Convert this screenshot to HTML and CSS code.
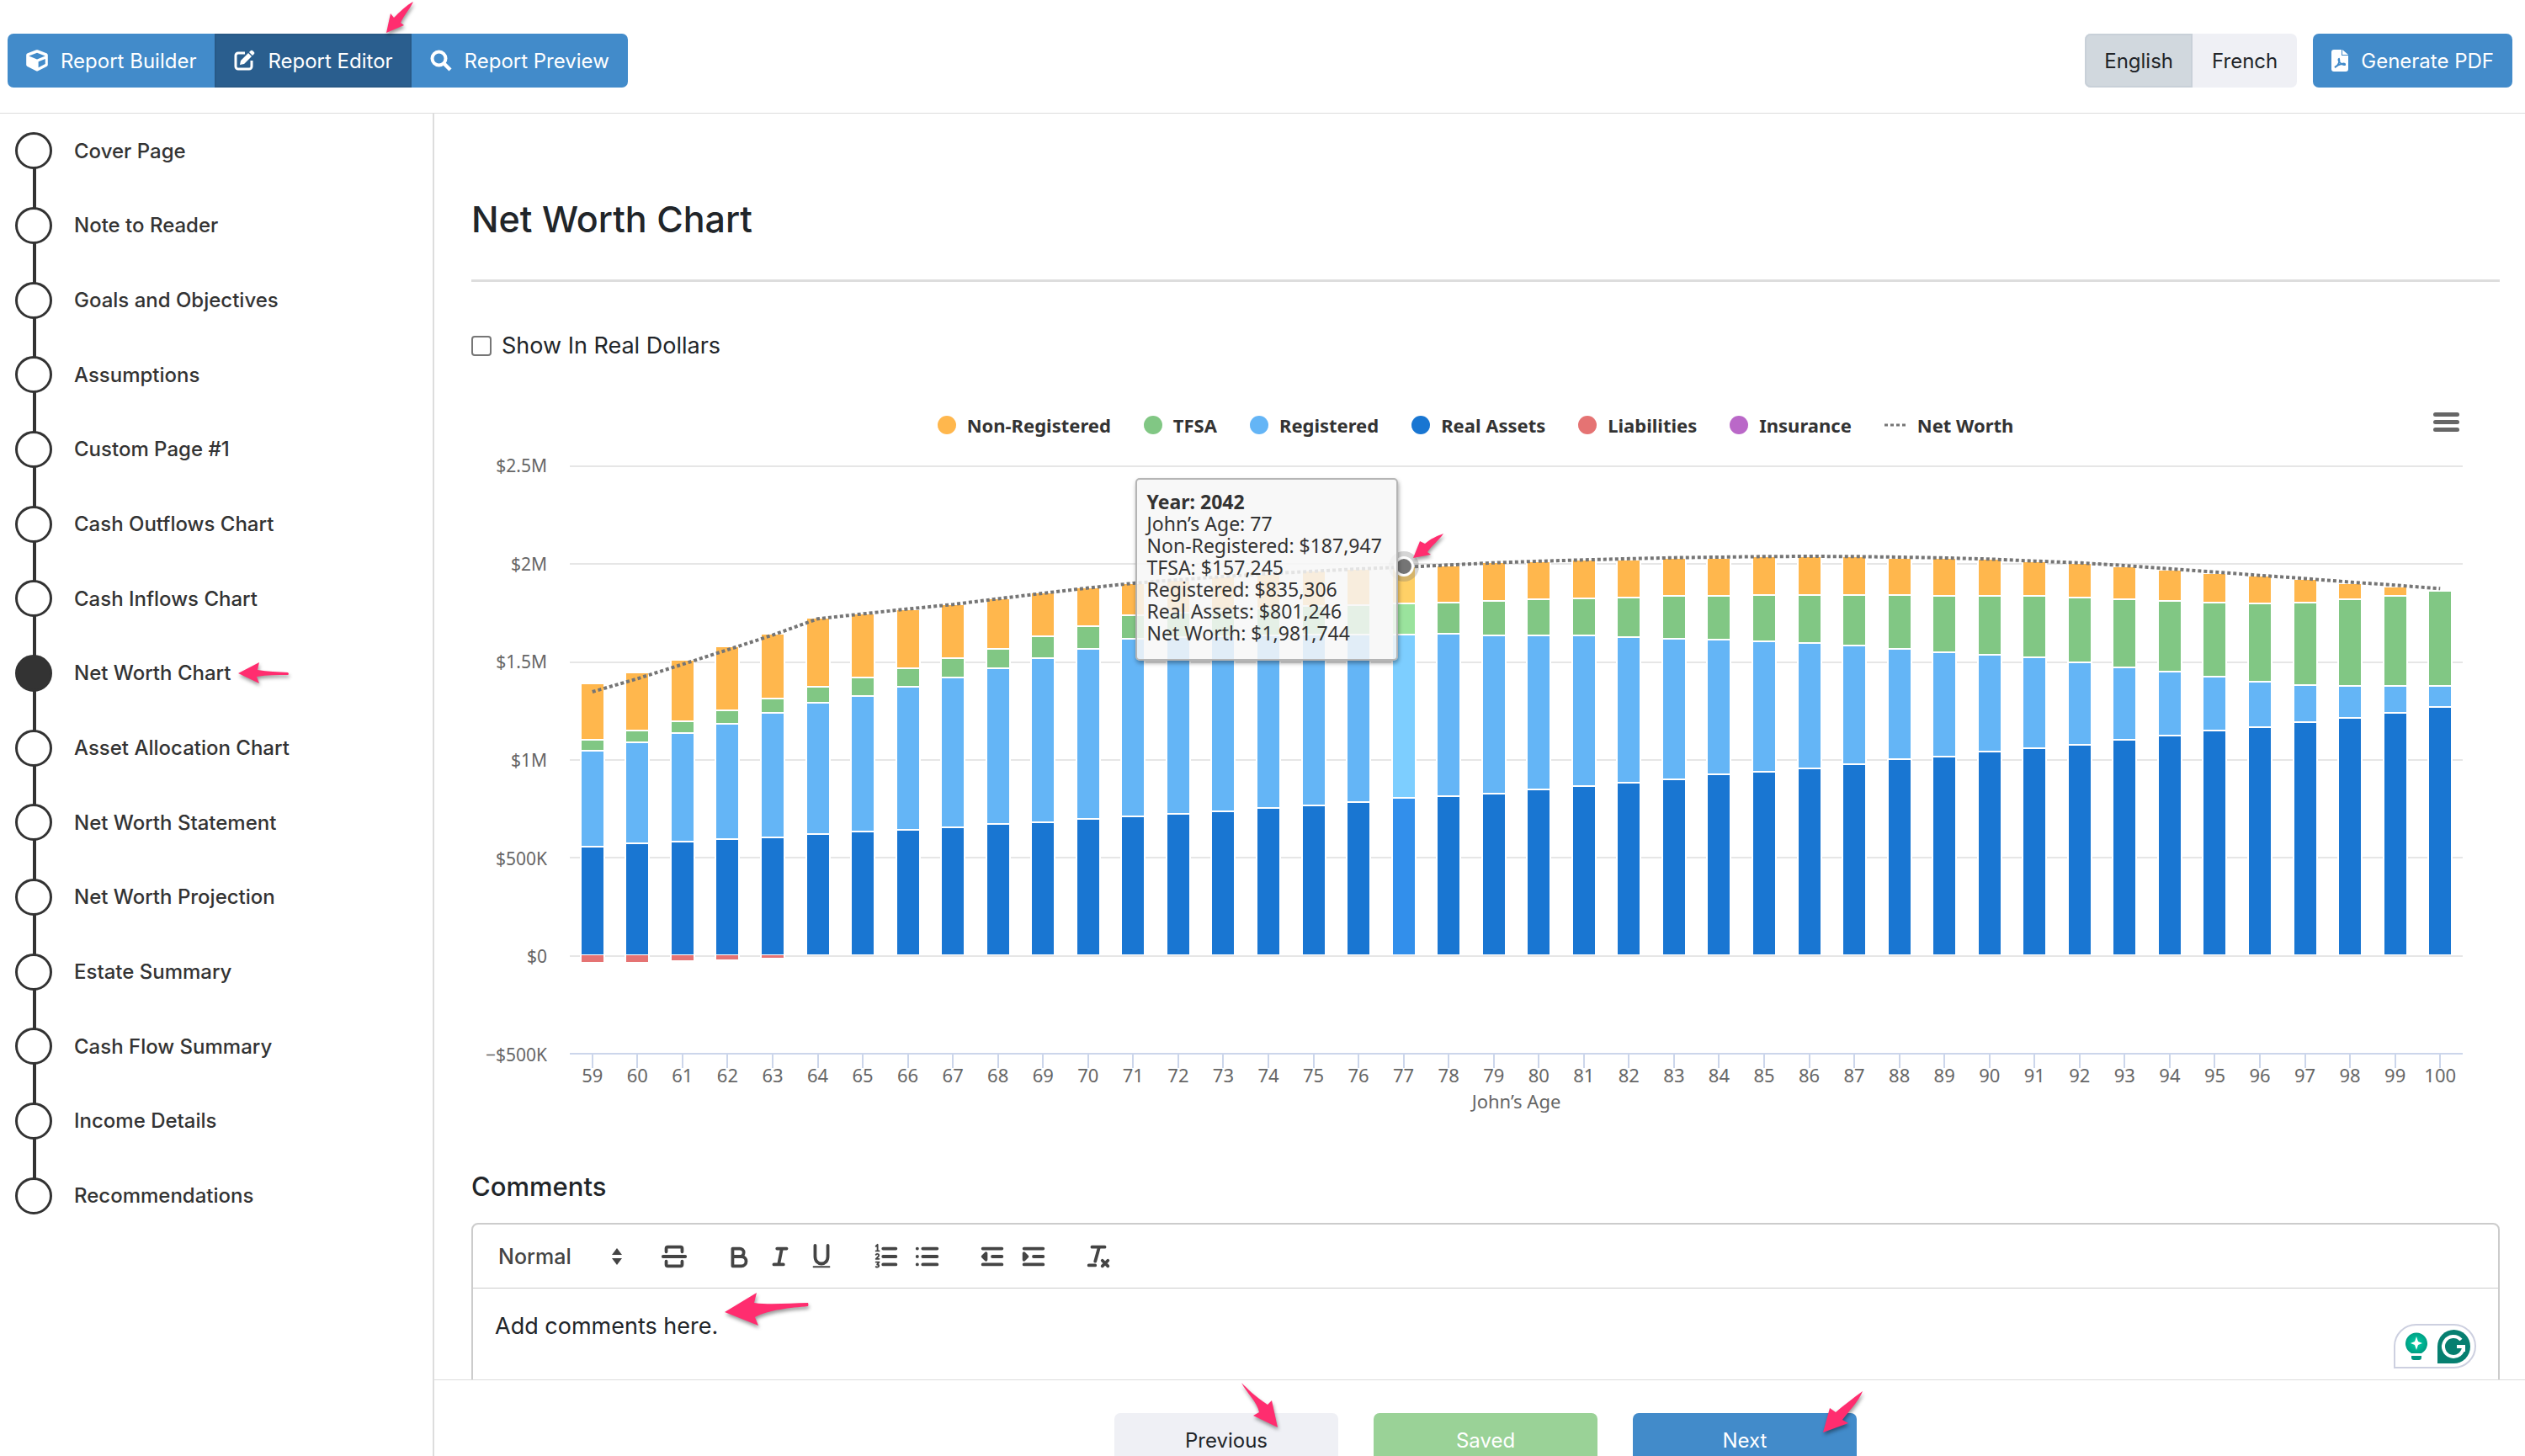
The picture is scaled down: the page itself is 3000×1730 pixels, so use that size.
FILE: index.html
```
<!DOCTYPE html>
<html lang="en">
<head>
    <meta charset="UTF-8">
    <meta name="viewport" content="width=device-width, initial-scale=1.0">
    <title>Report Editor - Net Worth Chart</title>
    <link rel="stylesheet" href="styles.css">
</head>
<body>
    <header class="topbar">
        <div class="btn-group">
            <button class="btn btn-primary">
                <svg class="icon" viewBox="0 0 512 512"><path fill="currentColor" d="M239 6 35 83a48 48 0 0 0-31 45v223c0 18 10 35 27 43l204 102a48 48 0 0 0 43 0l204-102c16-8 26-25 26-43V128c0-20-12-38-31-45L273 6a48 48 0 0 0-34 0zm17 68 192 72v1l-192 78-192-78v-1zm32 342V282l160-65v119z"/></svg>
                Report Builder
            </button>
            <button class="btn btn-primary active">
                <svg class="icon" viewBox="0 0 26 26"><path d="M14 4H6a3 3 0 0 0-3 3v13a3 3 0 0 0 3 3h13a3 3 0 0 0 3-3v-7" fill="none" stroke="currentColor" stroke-width="3"/><path fill="currentColor" d="m18 4 4 4-9 9-5 1 1-5zM19 3l1.500-1.500a2 2 0 0 1 3 0l1 1a2 2 0 0 1 0 3L23 7z"/></svg>
                Report Editor
            </button>
            <button class="btn btn-primary">
                <svg class="icon" viewBox="0 0 26 26"><circle cx="10.500" cy="10.500" r="8" fill="none" stroke="currentColor" stroke-width="4"/><path d="m16 16 8 8" stroke="currentColor" stroke-width="4.500"/></svg>
                Report Preview
            </button>
            <svg class="arrow arrow-editor" viewBox="0 0 34 40"><path d="M1 38 6 15l4 5C16 14 25 5 33 1 29 10 22 17 18 26l4 3z"/></svg>
        </div>
        <div class="actions">
            <div class="btn-group">
                <button class="btn btn-light active">English</button>
                <button class="btn btn-light">French</button>
            </div>
            <button class="btn btn-primary btn-pdf">
                <svg class="icon icon-pdf" viewBox="0 0 20 26"><path fill="currentColor" d="M3 0h9v7h8v16a3 3 0 0 1-3 3H3a3 3 0 0 1-3-3V3a3 3 0 0 1 3-3zm10 0 7 6h-7z"/><path d="M4 21c5-2 6-8 5-10-2 1 2 8 7 7 1-3-7-1-12 3z" fill="none" stroke="#428bca" stroke-width="2"/></svg>
                Generate PDF
            </button>
        </div>
    </header>

    <div class="layout">
        <nav class="sidebar">
            <ol class="steps">
                <li><a href="#">Cover Page</a></li>
                <li><a href="#">Note to Reader</a></li>
                <li><a href="#">Goals and Objectives</a></li>
                <li><a href="#">Assumptions</a></li>
                <li><a href="#">Custom Page #1</a></li>
                <li><a href="#">Cash Outflows Chart</a></li>
                <li><a href="#">Cash Inflows Chart</a></li>
                <li class="current">
                    <a href="#">Net Worth Chart</a>
                    <svg class="arrow arrow-step" viewBox="0 0 62 28"><path d="M1 14 26 1l-2 9c12 2 24 2 36 3q2 2 0 3c-12 0-25 0-37 2l3 8z"/></svg>
                </li>
                <li><a href="#">Asset Allocation Chart</a></li>
                <li><a href="#">Net Worth Statement</a></li>
                <li><a href="#">Net Worth Projection</a></li>
                <li><a href="#">Estate Summary</a></li>
                <li><a href="#">Cash Flow Summary</a></li>
                <li><a href="#">Income Details</a></li>
                <li><a href="#">Recommendations</a></li>
            </ol>
        </nav>

        <main class="main">
            <div class="content">
                <h1>Net Worth Chart</h1>
                <hr>
                <label class="check"><input type="checkbox"> Show In Real Dollars</label>

                <section class="chart">
                    <ul class="legend">
                        <li><span class="dot non-registered"></span>Non-Registered</li>
                        <li><span class="dot tfsa"></span>TFSA</li>
                        <li><span class="dot registered"></span>Registered</li>
                        <li><span class="dot real-assets"></span>Real Assets</li>
                        <li><span class="dot liabilities"></span>Liabilities</li>
                        <li><span class="dot insurance"></span>Insurance</li>
                        <li><svg class="dash" viewBox="0 0 26 4"><path d="M0 2h26"/></svg>Net Worth</li>
                    </ul>
                    <button class="chart-menu" aria-label="Chart menu"><span></span><span></span><span></span></button>

                    <div class="plot-row">
                        <div class="y-axis">
                            <span>$2.5M</span>
                            <span>$2M</span>
                            <span>$1.5M</span>
                            <span>$1M</span>
                            <span>$500K</span>
                            <span>$0</span>
                            <span>−$500K</span>
                        </div>
                        <div class="plot">
                            <div class="grid-lines">
                                <div></div><div></div><div></div><div></div><div></div><div></div>
                            </div>
                            <div class="bars" id="bars"></div>
                            <svg class="net-line" viewBox="0 0 42 3000" preserveAspectRatio="none"><polyline id="netLine" points=""/></svg>
                            <span class="marker"></span>
                            <div class="tooltip">
                                <strong>Year: 2042</strong>
                                <span>John’s Age: 77</span>
                                <span>Non-Registered: $187,947</span>
                                <span>TFSA: $157,245</span>
                                <span>Registered: $835,306</span>
                                <span>Real Assets: $801,246</span>
                                <span>Net Worth: $1,981,744</span>
                            </div>
                            <svg class="arrow arrow-point" viewBox="0 0 38 32"><path d="M1 30 9 10l6 3C22 7 29 4 37 1 31 10 23 15 18 23l4 3z"/></svg>
                        </div>
                    </div>
                    <div class="x-axis" id="xAxis"></div>
                    <div class="x-title">John’s Age</div>
                </section>

                <h2>Comments</h2>
                <div class="editor">
                    <div class="toolbar">
                        <div class="format">
                            <select aria-label="Text style"><option>Normal</option></select>
                            <svg viewBox="0 0 14 20"><path d="m7 0 6 8H1zM7 20l-6-8h12z"/></svg>
                        </div>
                        <div class="tools">
                            <button aria-label="Page break"><svg viewBox="0 0 18 18"><path d="M4 6V4q0-1 1-1h8q1 0 1 1v2M4 12v2q0 1 1 1h8q1 0 1-1v-2M2 9h14"/></svg></button>
                        </div>
                        <div class="tools">
                            <button aria-label="Bold"><svg viewBox="0 0 18 18"><path d="M5 4h4.500a2.500 2.500 0 0 1 0 5H5zM5 9h5.500a2.500 2.500 0 0 1 0 6H5z"/></svg></button>
                            <button aria-label="Italic"><svg viewBox="0 0 18 18"><path d="M7 4h6M5 14h6M8 14l2-10"/></svg></button>
                            <button aria-label="Underline"><svg viewBox="0 0 18 18"><path d="M5 2v7c0 6 8 6 8 0V2"/><path class="thin" d="M4 15.500h10"/></svg></button>
                        </div>
                        <div class="tools">
                            <button aria-label="Ordered list"><svg viewBox="0 0 18 18"><path d="M7 4h8M7 9h8M7 14h8"/><path class="thin" d="m2.500 2.500 1-1v4m-1 0h2M2.500 7.800c1-1 2.500 0 1.500 1.200l-1.500 1.500h2M2.500 12.500h2L3.300 14c1.500 0 1.500 2-.800 1.500"/></svg></button>
                            <button aria-label="Bullet list"><svg viewBox="0 0 18 18"><path d="M6 4h9M6 9h9M6 14h9"/><path d="M2.500 4h.1M2.500 9h.1M2.500 14h.1"/></svg></button>
                        </div>
                        <div class="tools">
                            <button aria-label="Outdent"><svg viewBox="0 0 18 18"><path d="M3 4h12M3 14h12M9 9h6"/><path class="solid" d="M5 7v4L3 9z"/></svg></button>
                            <button aria-label="Indent"><svg viewBox="0 0 18 18"><path d="M3 4h12M3 14h12M9 9h6"/><path class="solid" d="M3 7v4l2-2z"/></svg></button>
                        </div>
                        <div class="tools">
                            <button aria-label="Clear formatting"><svg viewBox="0 0 18 18"><path d="M5 3h8M9.500 3 7 12M3 14.500h4M11.500 11.500l3.500 3.500M15 11.500l-3.500 3.500"/></svg></button>
                        </div>
                    </div>
                    <textarea aria-label="Comments">Add comments here.</textarea>
                    <svg class="arrow arrow-comment" viewBox="0 0 102 42"><path d="M1 24 39 1l-3 12c20 3 44 0 64 0q1 2 0 4c-20 2-47 4-63 13l4 10z"/></svg>
                    <div class="assistant">
                        <svg viewBox="0 0 26 33"><defs><radialGradient id="bulb"><stop offset="0" stop-color="#00d2a8"/><stop offset="1" stop-color="#009f84"/></radialGradient></defs><path fill="url(#bulb)" d="M7 25a13 13 0 1 1 12 0z"/><path fill="#fff" d="m13 5 2 6 5 2-5 2-2 6-2-6-5-2 5-2z"/><path fill="#009580" d="M7 28h12v2q0 3-3 3h-6q-3 0-3-3z"/></svg>
                        <svg class="assistant-logo" viewBox="0 0 39 40"><path fill="#067f70" d="M0 40V20a19.500 20 0 1 1 19.500 20z"/><path d="M28 12a12 12 0 1 0 3 8h-8m8 0v6" fill="none" stroke="#fff" stroke-width="4"/></svg>
                    </div>
                </div>
            </div>

            <footer class="footer">
                <button class="btn btn-light">Previous
                    <svg class="arrow arrow-prev" viewBox="0 0 46 56"><path d="M1 1c7 7 16 16 31 26l5-5 7 32-29-14 7-4C20 24 7 13 1 1z"/></svg>
                </button>
                <button class="btn btn-success">Saved</button>
                <button class="btn btn-primary">Next
                    <svg class="arrow arrow-next" viewBox="0 0 50 52"><path d="M1 50 9 21l7 5C25 18 36 10 48 1 43 14 32 24 24 35l7 4z"/></svg>
                </button>
            </footer>
        </main>
    </div>

    <script src="script.js"></script>
</body>
</html>
```
FILE: styles.css
```
/* General */
*,
*::before,
*::after {
    margin: 0;
    padding: 0;
    box-sizing: border-box;
}

body {
    font-family: Inter, "Liberation Sans", sans-serif;
    font-size: 24px;
    color: #212529;
    background: #fff;
    height: 100vh;
    display: flex;
    flex-direction: column;
    overflow: hidden;
}

button, select, textarea {
    font: inherit;
    color: inherit;
}

/* Pink pointer arrows */
.arrow {
    position: absolute;
    overflow: visible;
    fill: #ff2d6f;
    filter: drop-shadow(1px 3px 2px rgba(0, 0, 0, 0.4));
    z-index: 5;
    pointer-events: none;
}

/* Top bar */
.topbar {
    display: flex;
    justify-content: space-between;
    padding: 40px 15px 30px 9px;
    border-bottom: 1px solid #ddd;
}

.btn-group {
    display: flex;
    position: relative;
}

.actions {
    display: flex;
    gap: 19px;
}

.btn {
    display: flex;
    align-items: center;
    justify-content: center;
    gap: 15px;
    height: 64px;
    padding: 0 22px;
    border: 0;
    border-radius: 7px;
    cursor: pointer;
}

.btn-group .btn {
    border-radius: 0;
}

.btn-group .btn:first-child {
    border-radius: 7px 0 0 7px;
}

.btn-group .btn:nth-child(3),
.actions .btn-group .btn:last-child {
    border-radius: 0 7px 7px 0;
}

.btn-primary {
    background: #428bca;
    color: #fff;
}

.btn-primary.active {
    background: #2a5e8e;
    box-shadow: inset 0 0 0 2px #285986;
}

.btn-light {
    padding: 0 23px;
    background: #eff0f5;
}

.btn-light.active {
    background: #d1d8de;
    box-shadow: inset 0 0 0 2px #c8d0d8;
}

.btn-success {
    background: #9ad297;
    color: #fff;
}

.icon {
    width: 26px;
    height: 26px;
}

.icon-pdf {
    width: 20px;
}

.arrow-editor {
    left: 449px;
    top: -39px;
    width: 34px;
    height: 40px;
}

/* Sidebar */
.layout {
    flex: 1;
    min-height: 0;
    display: flex;
}

.sidebar {
    width: 516px;
    flex: none;
    border-right: 2px solid #ddd;
}

.steps {
    list-style: none;
    display: grid;
    grid-auto-rows: 1fr;
    height: 1330px;
    padding-left: 18px;
    font-weight: 500;
}

.steps li {
    display: flex;
    align-items: center;
    position: relative;
}

.steps li::before {
    content: "";
    width: 44px;
    height: 44px;
    margin-right: 26px;
    border: 3px solid #333;
    border-radius: 50%;
    background: #fff;
    z-index: 1;
}

.steps li.current::before {
    background: #333;
}

/* line to the next step */
.steps li:not(:last-child)::after {
    content: "";
    position: absolute;
    left: 21px;
    top: 50%;
    width: 4px;
    height: 100%;
    background: #333;
}

.steps a {
    color: #333;
    text-decoration: none;
}

.steps .arrow-step {
    position: static;
    width: 62px;
    height: 28px;
    margin-left: 8px;
}

/* Main content */
.main {
    flex: 1;
    min-width: 0;
    display: flex;
    flex-direction: column;
}

.content {
    flex: 1;
    min-height: 0;
    overflow: hidden;
    padding: 95px 30px 0 44px;
}

h1 {
    font-size: 43px;
    line-height: 60px;
    font-weight: 500;
}

hr {
    height: 3px;
    border: 0;
    background: #ddd;
    margin: 42px 0 59px;
}

.check {
    display: flex;
    align-items: center;
    gap: 12px;
    font-size: 27px;
    line-height: 34px;
}

.check input {
    appearance: none;
    width: 24px;
    height: 24px;
    border: 2px solid #767676;
    border-radius: 4px;
    background: #fff;
}

/* Chart */
.chart {
    position: relative;
    margin-top: 62px;
    font-family: "Noto Sans", "Open Sans", sans-serif;
    font-size: 22px;
    color: #666;
}

.legend {
    list-style: none;
    display: flex;
    justify-content: center;
    gap: 39px;
    padding-right: 24px;
    margin-bottom: 33px;
    line-height: 30px;
    font-weight: 700;
    color: #333;
}

.legend li {
    display: flex;
    align-items: center;
    gap: 13px;
}

.dot {
    width: 22px;
    height: 22px;
    border-radius: 50%;
}

.dash {
    width: 26px;
    height: 4px;
    stroke: #757575;
    stroke-width: 3;
    stroke-dasharray: 4 3;
}

.non-registered { background: #ffb74d; }
.tfsa { background: #81c784; }
.registered { background: #64b5f6; }
.real-assets { background: #1976d2; }
.liabilities { background: #e57373; }
.insurance { background: #ba68c8; }

.chart-menu {
    position: absolute;
    right: 48px;
    top: 0;
    width: 31px;
    display: flex;
    flex-direction: column;
    gap: 4px;
    border: 0;
    background: none;
}

.chart-menu span {
    height: 5px;
    border-radius: 3px;
    background: #666;
}

.plot-row {
    display: flex;
    height: 700px;
}

.y-axis {
    width: 117px;
    padding-right: 27px;
    display: flex;
    flex-direction: column;
    justify-content: space-between;
    align-items: flex-end;
    font-size: 21px;
    line-height: 24px;
}

.y-axis span {
    margin: -12px 0;
}

.plot {
    flex: 1;
    position: relative;
    margin-right: 44px;
}

.grid-lines {
    height: 100%;
    display: flex;
    flex-direction: column;
    border-bottom: 2px solid #ccd6eb;
}

.grid-lines div {
    flex: 1;
    border-top: 2px solid #e6e6e6;
}

.bars {
    position: absolute;
    inset: -2px 0 2px;
    display: flex;
}

.bar {
    flex: 1;
    display: flex;
    flex-direction: column;
    justify-content: flex-end;
    align-items: center;
}

.bar div {
    width: 56%;
    flex: none;
    border: 2px solid #fff;
    border-bottom: 0;
}

.bar .below {
    height: 16.6667%;
    border: 0;
}

.bar .below div {
    width: 100%;
    border-top-width: 1px;
}

.bar.hover .non-registered { background: #ffd066; }
.bar.hover .tfsa { background: #9ae39d; }
.bar.hover .registered { background: #7dceff; }
.bar.hover .real-assets { background: #328feb; }

.net-line {
    position: absolute;
    inset: 0;
    width: 100%;
    height: 100%;
}

.net-line polyline {
    fill: none;
    stroke: #757575;
    stroke-width: 4;
    stroke-dasharray: 4 3;
    vector-effect: non-scaling-stroke;
}

.marker {
    position: absolute;
    left: calc(44% - 11px);
    top: 108px;
    width: 24px;
    height: 24px;
    border: 3px solid #fff;
    border-radius: 50%;
    background: #757575;
    box-shadow: 0 0 0 6px rgba(117, 117, 117, 0.3);
}

.tooltip {
    position: absolute;
    right: calc(56% + 6px);
    top: 15px;
    width: 312px;
    padding: 13px 12px 18px;
    display: flex;
    flex-direction: column;
    background: rgba(247, 247, 247, 0.85);
    border: 2px solid #b5b5b5;
    border-radius: 5px;
    box-shadow: 1px 3px 5px rgba(0, 0, 0, 0.35);
    font-size: 23px;
    line-height: 26px;
    color: #333;
    white-space: nowrap;
}

.arrow-point {
    left: calc(44% + 11px);
    top: 80px;
    width: 38px;
    height: 32px;
}

.x-axis {
    display: flex;
    margin: 0 44px 0 117px;
    line-height: 16px;
}

.x-axis span {
    flex: 1;
    display: flex;
    flex-direction: column;
    align-items: center;
}

.x-axis span::before {
    content: "";
    width: 2px;
    height: 16px;
    background: #ccd6eb;
}

.x-title {
    margin: 10px 44px 0 117px;
    line-height: 26px;
    text-align: center;
}

/* Comments editor */
h2 {
    margin: 69px 0 23px;
    font-size: 31px;
    line-height: 40px;
    font-weight: 500;
}

.editor {
    position: relative;
    height: 300px;
    border: 2px solid #ccc;
    border-radius: 8px;
}

.toolbar {
    display: flex;
    align-items: center;
    gap: 28px;
    height: 76px;
    padding: 0 30px;
    border-bottom: 1px solid #ccc;
    color: #444;
}

.format {
    display: flex;
    align-items: center;
    width: 156px;
}

.format select {
    flex: 1;
    appearance: none;
    border: 0;
    background: none;
    font-size: 25px;
    font-weight: 500;
}

.format svg {
    width: 14px;
    height: 20px;
    margin-right: 8px;
    fill: #444;
}

.tools {
    display: flex;
}

.tools button {
    width: 49px;
    height: 40px;
    border: 0;
    background: none;
}

.tools svg {
    display: block;
    width: 34px;
    height: 34px;
    margin: 0 auto;
    fill: none;
    stroke: #444;
    stroke-width: 2;
    stroke-linecap: round;
    stroke-linejoin: round;
}

.tools .thin {
    stroke-width: 1;
}

.tools .solid {
    fill: #444;
}

textarea {
    display: block;
    width: 100%;
    height: 200px;
    padding: 25px 26px;
    border: 0;
    outline: 0;
    resize: none;
    background: none;
    font-size: 27px;
    line-height: 40px;
}

.arrow-comment {
    left: 298px;
    top: 80px;
    width: 102px;
    height: 42px;
}

.assistant {
    position: absolute;
    right: 26px;
    top: 118px;
    width: 98px;
    height: 53px;
    padding: 0 5px 0 12px;
    display: flex;
    align-items: center;
    justify-content: space-between;
    border: 2px solid #cdd0e0;
    border-radius: 27px 27px 27px 0;
    background: #fff;
}

.assistant svg {
    width: 26px;
    height: 33px;
}

.assistant .assistant-logo {
    width: 39px;
    height: 40px;
}

/* Footer */
.footer {
    flex: none;
    height: 91px;
    display: flex;
    justify-content: center;
    gap: 42px;
    padding: 39px 30px 0 44px;
    border-top: 1px solid #ddd;
}

.footer .btn {
    position: relative;
    width: 266px;
}

.arrow-prev {
    left: 150px;
    top: -37px;
    width: 46px;
    height: 56px;
}

.arrow-next {
    left: 225px;
    top: -27px;
    width: 50px;
    height: 52px;
}
```
FILE: script.js
```
// [age, real assets, registered top, TFSA top, non-registered top, liabilities, net worth] in $K
const rows = [
    [59, 554, 1042, 1097, 1384, 37, 1347],
    [60, 571, 1088, 1144, 1442, 37, 1414],
    [61, 578, 1134, 1195, 1505, 28, 1487],
    [62, 592, 1179, 1249, 1573, 23, 1561],
    [63, 601, 1235, 1309, 1640, 14, 1636],
    [64, 617, 1286, 1370, 1719, 0, 1719],
    [65, 631, 1323, 1416, 1742, 0, 1744],
    [66, 639, 1370, 1461, 1764, 0, 1769],
    [67, 655, 1416, 1515, 1787, 0, 1792],
    [68, 669, 1461, 1561, 1819, 0, 1821],
    [69, 678, 1515, 1624, 1847, 0, 1849],
    [70, 694, 1561, 1677, 1873, 0, 1876],
    [71, 708, 1612, 1732, 1897, 0, 1900],
    [72, 721, 1620, 1745, 1915, 0, 1918],
    [73, 736, 1626, 1757, 1930, 0, 1934],
    [74, 751, 1630, 1768, 1945, 0, 1949],
    [75, 765, 1633, 1778, 1958, 0, 1961],
    [76, 782, 1635, 1786, 1970, 0, 1973],
    [77, 801, 1636, 1794, 1982, 0, 1982],
    [78, 813, 1638, 1799, 1987, 0, 1993],
    [79, 826, 1632, 1807, 2001, 0, 2004],
    [80, 844, 1630, 1814, 2007, 0, 2012],
    [81, 865, 1628, 1820, 2016, 0, 2019],
    [82, 882, 1622, 1824, 2018, 0, 2025],
    [83, 898, 1614, 1830, 2024, 0, 2030],
    [84, 921, 1607, 1832, 2026, 0, 2033],
    [85, 934, 1599, 1837, 2032, 0, 2036],
    [86, 951, 1591, 1837, 2032, 0, 2037],
    [87, 973, 1577, 1837, 2032, 0, 2036],
    [88, 999, 1562, 1837, 2026, 0, 2033],
    [89, 1013, 1546, 1830, 2026, 0, 2029],
    [90, 1037, 1531, 1830, 2019, 0, 2023],
    [91, 1056, 1517, 1830, 2009, 0, 2013],
    [92, 1073, 1493, 1823, 1997, 0, 2004],
    [93, 1097, 1469, 1816, 1983, 0, 1990],
    [94, 1118, 1445, 1808, 1966, 0, 1974],
    [95, 1144, 1419, 1799, 1947, 0, 1957],
    [96, 1163, 1395, 1792, 1933, 0, 1940],
    [97, 1187, 1378, 1799, 1916, 0, 1924],
    [98, 1211, 1371, 1816, 1897, 0, 1906],
    [99, 1235, 1371, 1830, 1878, 0, 1890],
    [100, 1266, 1371, 1859, 1859, 0, 1873]
];

// the axis runs from -500K to 2.5M
const RANGE = 3000;
const bars = document.getElementById('bars');
const xAxis = document.getElementById('xAxis');
const points = [];

function addPart(parent, name, value, range) {
    if (value <= 0) return;
    const part = document.createElement('div');
    part.className = name;
    part.style.height = (value / range * 100) + '%';
    parent.appendChild(part);
}

rows.forEach(([age, real, registered, tfsa, nonReg, debt, net], i) => {
    const bar = document.createElement('div');
    bar.className = age === 77 ? 'bar hover' : 'bar';
    addPart(bar, 'non-registered', nonReg - tfsa, RANGE);
    addPart(bar, 'tfsa', tfsa - registered, RANGE);
    addPart(bar, 'registered', registered - real, RANGE);
    addPart(bar, 'real-assets', real, RANGE);

    const below = document.createElement('div');
    below.className = 'below';
    addPart(below, 'liabilities', debt, 500);
    bar.appendChild(below);
    bars.appendChild(bar);

    const label = document.createElement('span');
    label.textContent = age;
    xAxis.appendChild(label);

    points.push((i + 0.5) + ',' + (2500 - net));
});

document.getElementById('netLine').setAttribute('points', points.join(' '));
```
